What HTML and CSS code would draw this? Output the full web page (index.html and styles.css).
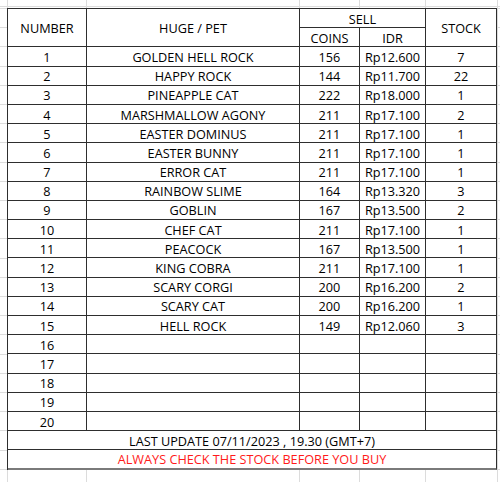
FILE: index.html
```html
<!DOCTYPE html>
<html lang="en">
<head>
<meta charset="utf-8">
<title>Huge Pet Stock</title>
<link rel="stylesheet" href="styles.css">
</head>
<body>
<div class="sheet">
  <div class="grid">
    <div class="c h num">NUMBER</div>
    <div class="c h pet">HUGE / PET</div>
    <div class="c h sell">SELL</div>
    <div class="c h stock">STOCK</div>
    <div class="c">COINS</div>
    <div class="c">IDR</div>

    <div class="c">1</div><div class="c">GOLDEN HELL ROCK</div><div class="c">156</div><div class="c">Rp12.600</div><div class="c">7</div>
    <div class="c">2</div><div class="c">HAPPY ROCK</div><div class="c">144</div><div class="c">Rp11.700</div><div class="c">22</div>
    <div class="c">3</div><div class="c">PINEAPPLE CAT</div><div class="c">222</div><div class="c">Rp18.000</div><div class="c">1</div>
    <div class="c">4</div><div class="c">MARSHMALLOW AGONY</div><div class="c">211</div><div class="c">Rp17.100</div><div class="c">2</div>
    <div class="c">5</div><div class="c">EASTER DOMINUS</div><div class="c">211</div><div class="c">Rp17.100</div><div class="c">1</div>
    <div class="c">6</div><div class="c">EASTER BUNNY</div><div class="c">211</div><div class="c">Rp17.100</div><div class="c">1</div>
    <div class="c">7</div><div class="c">ERROR CAT</div><div class="c">211</div><div class="c">Rp17.100</div><div class="c">1</div>
    <div class="c">8</div><div class="c">RAINBOW SLIME</div><div class="c">164</div><div class="c">Rp13.320</div><div class="c">3</div>
    <div class="c">9</div><div class="c">GOBLIN</div><div class="c">167</div><div class="c">Rp13.500</div><div class="c">2</div>
    <div class="c">10</div><div class="c">CHEF CAT</div><div class="c">211</div><div class="c">Rp17.100</div><div class="c">1</div>
    <div class="c">11</div><div class="c">PEACOCK</div><div class="c">167</div><div class="c">Rp13.500</div><div class="c">1</div>
    <div class="c">12</div><div class="c">KING COBRA</div><div class="c">211</div><div class="c">Rp17.100</div><div class="c">1</div>
    <div class="c">13</div><div class="c">SCARY CORGI</div><div class="c">200</div><div class="c">Rp16.200</div><div class="c">2</div>
    <div class="c">14</div><div class="c">SCARY CAT</div><div class="c">200</div><div class="c">Rp16.200</div><div class="c">1</div>
    <div class="c">15</div><div class="c">HELL ROCK</div><div class="c">149</div><div class="c">Rp12.060</div><div class="c">3</div>
    <div class="c">16</div><div class="c"></div><div class="c"></div><div class="c"></div><div class="c"></div>
    <div class="c">17</div><div class="c"></div><div class="c"></div><div class="c"></div><div class="c"></div>
    <div class="c">18</div><div class="c"></div><div class="c"></div><div class="c"></div><div class="c"></div>
    <div class="c">19</div><div class="c"></div><div class="c"></div><div class="c"></div><div class="c"></div>
    <div class="c">20</div><div class="c"></div><div class="c"></div><div class="c"></div><div class="c"></div>

    <div class="c full">LAST UPDATE 07/11/2023 , 19.30 (GMT+7)</div>
    <div class="c full red last">ALWAYS CHECK THE STOCK BEFORE YOU BUY</div>
  </div>
</div>
</body>
</html>
```

FILE: styles.css
```css
html, body {
  margin: 0;
  height: 100%;
}

body {
  background-color: #ffffff;
  background-image:
    linear-gradient(#dcdcdc, #dcdcdc),
    linear-gradient(#dcdcdc, #dcdcdc),
    linear-gradient(#dcdcdc, #dcdcdc),
    linear-gradient(#dcdcdc, #dcdcdc),
    linear-gradient(#dcdcdc, #dcdcdc),
    linear-gradient(#dcdcdc, #dcdcdc),
    repeating-linear-gradient(to bottom, #dcdcdc 0 1px, transparent 1px 19.2px);
  background-size:
    1px 100%, 1px 100%, 1px 100%, 1px 100%, 1px 100%, 1px 100%,
    100% 100%;
  background-position:
    7px 0, 86px 0, 299px 0, 359px 0, 425px 0, 497px 0,
    0 8px;
  background-repeat: no-repeat, no-repeat, no-repeat, no-repeat, no-repeat, no-repeat, repeat;
  font-family: "Open Sans", "Noto Sans", sans-serif;
  color: #000000;
}

.sheet {
  padding: 8px 0 0 7px;
}

.grid {
  display: grid;
  grid-template-columns: 79px 213px 60px 66px 71px;
  grid-auto-rows: 19.2px;
  width: max-content;
  border-left: 1px solid #2e2e2e;
  border-top: 1px solid #2e2e2e;
  background: #ffffff;
}

.c {
  border-right: 1px solid #2e2e2e;
  border-bottom: 1px solid #2e2e2e;
  display: flex;
  align-items: center;
  justify-content: center;
  font-size: 12.7px;
  line-height: 14px;
  padding-top: 1px;
  white-space: nowrap;
  overflow: hidden;
}

.num, .pet, .stock {
  grid-row: span 2;
}

.sell {
  grid-column: span 2;
}

.full {
  grid-column: 1 / -1;
}

.red {
  color: #ff1a1a;
}

.last {
  border-bottom: 2px solid #7a7a7a;
}
```
